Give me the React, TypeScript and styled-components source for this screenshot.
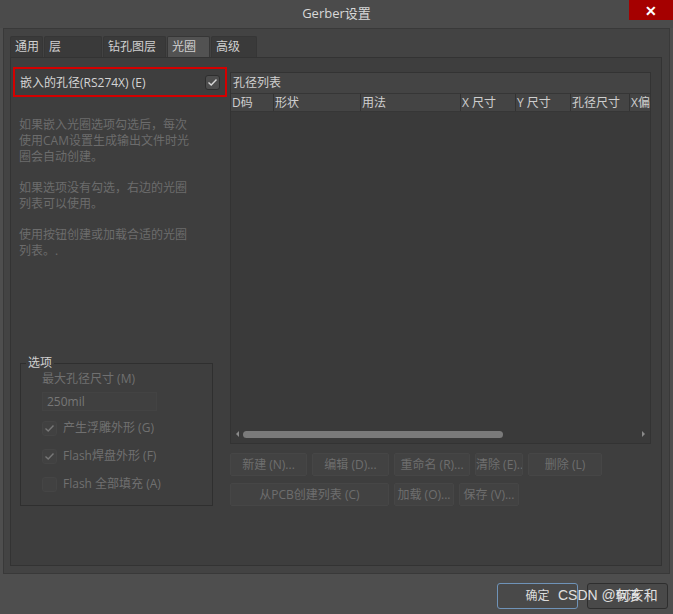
import React from 'react';
import styled, { createGlobalStyle } from 'styled-components';

const GlobalStyle = createGlobalStyle`
  html, body {
    margin: 0;
    padding: 0;
    background: #4e4e4e;
  }
  body {
    font-family: 'Open Sans', 'Noto Sans CJK SC', sans-serif;
    font-size: 12px;
  }
`;

const Window = styled.div`
  position: relative;
  width: 673px;
  height: 614px;
  background: #4e4e4e;
  display: flex;
  flex-direction: column;
  overflow: hidden;
`;

const TitleBar = styled.div`
  height: 28px;
  display: grid;
  grid-template-columns: 1fr auto 1fr;
  align-items: start;
  background: #4b4b4b;
`;

const Title = styled.div`
  grid-column: 2;
  line-height: 26px;
  font-size: 13px;
  color: #d8d8d8;
`;

const CloseButton = styled.div`
  grid-column: 3;
  justify-self: end;
  width: 44px;
  height: 20px;
  background: #a50000;
  color: #fff;
  font-size: 14px;
  font-weight: bold;
  display: flex;
  align-items: center;
  justify-content: center;
`;

const Frame = styled.div`
  height: 546px;
  margin: 0 3px;
  box-sizing: border-box;
  background: #434343;
  border: 1px solid #393939;
  padding: 7px 7px 7px 6px;
  display: flex;
  flex-direction: column;
`;

const TabRow = styled.div`
  display: flex;
  gap: 1px;
  height: 21px;
`;

const Tab = styled.div<{ $w: number; $active?: boolean }>`
  width: ${(p) => p.$w}px;
  box-sizing: border-box;
  background: ${(p) => (p.$active ? '#525252' : '#3a3a3a')};
  border: 1px solid #363636;
  border-bottom: none;
  border-radius: 2px 2px 0 0;
  color: #d0d0d0;
  font-size: 12px;
  line-height: 20px;
  padding-left: 4px;
`;

const Panel = styled.div`
  flex: 1;
  box-sizing: border-box;
  background: #3e3e3e;
  border: 1px solid #333;
  display: flex;
  padding: 9px 10px 0 2px;
  gap: 3px;
`;

const LeftCol = styled.div`
  width: 214px;
  flex-shrink: 0;
  display: flex;
  flex-direction: column;
`;

const EmbedBox = styled.div`
  height: 30px;
  box-sizing: border-box;
  border: 2px solid #d40000;
  display: flex;
  align-items: center;
  justify-content: space-between;
  padding: 0 5px 0 5px;
  color: #d4d4d4;
  font-size: 12px;
`;

const Check = styled.div<{ $dim?: boolean }>`
  width: 15px;
  height: 15px;
  flex-shrink: 0;
  box-sizing: border-box;
  border-radius: 3px;
  background: ${(p) => (p.$dim ? '#414141' : '#4d4d4d')};
  border: 1px solid ${(p) => (p.$dim ? '#454545' : '#2e2e2e')};
  display: flex;
  align-items: center;
  justify-content: center;
`;

const Desc = styled.p`
  margin: 0;
  padding: 0 6px;
  color: #6c6c6c;
  font-size: 12px;
  line-height: 16px;
  & + & {
    margin-top: 15px;
  }
`;

const DescWrap = styled.div`
  margin-top: 20px;
`;

const Group = styled.fieldset`
  margin: auto 0 59px 7px;
  width: 193px;
  height: 150px;
  box-sizing: border-box;
  border: 1px solid #2f2f2f;
  padding: 0;
  legend {
    color: #d0d0d0;
    font-size: 12px;
    padding: 0 2px;
    margin-left: 5px;
    line-height: 14px;
  }
`;

const GroupBody = styled.div`
  display: flex;
  flex-direction: column;
  padding-left: 21px;
`;

const FieldLabel = styled.div`
  color: #707070;
  font-size: 12px;
  line-height: 16px;
  margin-top: 1px;
`;

const Input = styled.div`
  width: 115px;
  height: 19px;
  box-sizing: border-box;
  margin-top: 5px;
  background: #404040;
  border: 1px solid #434343;
  color: #777;
  font-size: 12px;
  line-height: 17px;
  padding-left: 4px;
`;

const OptRow = styled.div<{ $first?: boolean }>`
  display: flex;
  align-items: center;
  gap: 6px;
  margin-top: ${(p) => (p.$first ? 9 : 12)}px;
  color: #707070;
  font-size: 12px;
  line-height: 16px;
`;

const RightCol = styled.div`
  flex: 1;
  min-width: 0;
  display: flex;
  flex-direction: column;
  padding-top: 5px;
`;

const ListBox = styled.div`
  height: 372px;
  box-sizing: border-box;
  background: #3a3a3a;
  border: 1px solid #333;
  display: flex;
  flex-direction: column;
`;

const ListTitle = styled.div`
  height: 20px;
  background: #444;
  color: #cfcfcf;
  font-size: 12px;
  line-height: 20px;
  padding-left: 2px;
  border-bottom: 1px solid #363636;
`;

const HeaderRow = styled.div`
  display: flex;
  height: 17px;
  background: #444;
  border-bottom: 1px solid #363636;
  overflow: hidden;
`;

const HeaderCell = styled.div<{ $w: number }>`
  flex: 0 0 ${(p) => p.$w}px;
  box-sizing: border-box;
  border-right: 1px solid #333;
  color: #cfcfcf;
  font-size: 12px;
  line-height: 17px;
  padding-left: 1px;
  white-space: nowrap;
  overflow: hidden;
`;

const ListBody = styled.div`
  flex: 1;
`;

const ScrollBar = styled.div`
  height: 14px;
  display: flex;
  align-items: center;
  padding: 0 5px 2px 5px;
  gap: 4px;
`;

const ScrollThumb = styled.div`
  width: 260px;
  height: 7px;
  border-radius: 4px;
  background: #7a7a7a;
`;

const Arrow = styled.div<{ $right?: boolean }>`
  width: 0;
  height: 0;
  border-top: 3px solid transparent;
  border-bottom: 3px solid transparent;
  ${(p) => (p.$right ? 'border-left: 3px solid #8a8a8a; margin-left: auto;' : 'border-right: 3px solid #8a8a8a;')}
`;

const BtnRow = styled.div<{ $top: number }>`
  display: flex;
  gap: 5px;
  margin-top: ${(p) => p.$top}px;
`;

const Btn = styled.div<{ $w: number }>`
  width: ${(p) => p.$w}px;
  height: 23px;
  box-sizing: border-box;
  background: #424242;
  border: 1px solid #464646;
  border-radius: 2px;
  color: #6e6e6e;
  font-size: 12px;
  line-height: 21px;
  text-align: center;
  white-space: nowrap;
  overflow: hidden;
`;

const Footer = styled.div`
  display: flex;
  justify-content: flex-end;
  gap: 9px;
  padding: 9px 5px 0 0;
`;

const FooterBtn = styled.div<{ $primary?: boolean }>`
  width: 81px;
  height: 26px;
  box-sizing: border-box;
  border-radius: 3px;
  background: #494949;
  border: 1px solid ${(p) => (p.$primary ? '#6f93b8' : '#2e2e2e')};
  color: #dcdcdc;
  font-size: 12px;
  line-height: 24px;
  text-align: center;
`;

const Watermark = styled.div`
  position: absolute;
  left: 558px;
  top: 586px;
  color: #f0f0f0;
  font-family: 'Liberation Sans', 'Noto Sans CJK SC', sans-serif;
  font-size: 14px;
  line-height: 18px;
  opacity: 0.9;
`;

const Tick = ({ color = '#d8d8d8' }: { color?: string }) => (
  <svg width="11" height="9" viewBox="0 0 11 9">
    <path d="M1.5 4.5 L4.2 7 L9.5 1.5" fill="none" stroke={color} strokeWidth="1.4" />
  </svg>
);

const tabs = [
  { label: '通用', w: 33 },
  { label: '层', w: 58 },
  { label: '钻孔图层', w: 63 },
  { label: '光圈', w: 43, active: true },
  { label: '高级', w: 46 },
];

const columns = [
  { label: 'D码', w: 43 },
  { label: '形状', w: 87 },
  { label: '用法', w: 100 },
  { label: 'X 尺寸', w: 55 },
  { label: 'Y 尺寸', w: 55 },
  { label: '孔径尺寸', w: 59 },
  { label: 'X偏', w: 30 },
];

export default function App() {
  return (
    <Window>
      <GlobalStyle />
      <TitleBar>
        <Title>Gerber设置</Title>
        <CloseButton>✕</CloseButton>
      </TitleBar>
      <Frame>
        <TabRow>
          {tabs.map((t) => (
            <Tab key={t.label} $w={t.w} $active={t.active}>
              {t.label}
            </Tab>
          ))}
        </TabRow>
        <Panel>
          <LeftCol>
            <EmbedBox>
              <span>嵌入的孔径(RS274X) (E)</span>
              <Check>
                <Tick />
              </Check>
            </EmbedBox>
            <DescWrap>
              <Desc>
                如果嵌入光圈选项勾选后，每次
                <br />
                使用CAM设置生成输出文件时光
                <br />
                圈会自动创建。
              </Desc>
              <Desc>
                如果选项没有勾选，右边的光圈
                <br />
                列表可以使用。
              </Desc>
              <Desc>
                使用按钮创建或加载合适的光圈
                <br />
                列表。.
              </Desc>
            </DescWrap>
            <Group>
              <legend>选项</legend>
              <GroupBody>
                <FieldLabel>最大孔径尺寸 (M)</FieldLabel>
                <Input>250mil</Input>
                <OptRow $first>
                  <Check $dim>
                    <Tick color="#777" />
                  </Check>
                  产生浮雕外形 (G)
                </OptRow>
                <OptRow>
                  <Check $dim>
                    <Tick color="#777" />
                  </Check>
                  Flash焊盘外形 (F)
                </OptRow>
                <OptRow>
                  <Check $dim />
                  Flash 全部填充 (A)
                </OptRow>
              </GroupBody>
            </Group>
          </LeftCol>
          <RightCol>
            <ListBox>
              <ListTitle>孔径列表</ListTitle>
              <HeaderRow>
                {columns.map((c) => (
                  <HeaderCell key={c.label} $w={c.w}>
                    {c.label}
                  </HeaderCell>
                ))}
              </HeaderRow>
              <ListBody />
              <ScrollBar>
                <Arrow />
                <ScrollThumb />
                <Arrow $right />
              </ScrollBar>
            </ListBox>
            <BtnRow $top={9}>
              <Btn $w={77}>新建 (N)...</Btn>
              <Btn $w={77}>编辑 (D)...</Btn>
              <Btn $w={76}>重命名 (R)...</Btn>
              <Btn $w={48}>清除 (E)...</Btn>
              <Btn $w={74}>删除 (L)</Btn>
            </BtnRow>
            <BtnRow $top={7}>
              <Btn $w={159}>从PCB创建列表 (C)</Btn>
              <Btn $w={60}>加载 (O)...</Btn>
              <Btn $w={60}>保存 (V)...</Btn>
            </BtnRow>
          </RightCol>
        </Panel>
      </Frame>
      <Footer>
        <FooterBtn $primary>确定</FooterBtn>
        <FooterBtn>取消</FooterBtn>
      </Footer>
      <Watermark>CSDN @何亥和</Watermark>
    </Window>
  );
}
